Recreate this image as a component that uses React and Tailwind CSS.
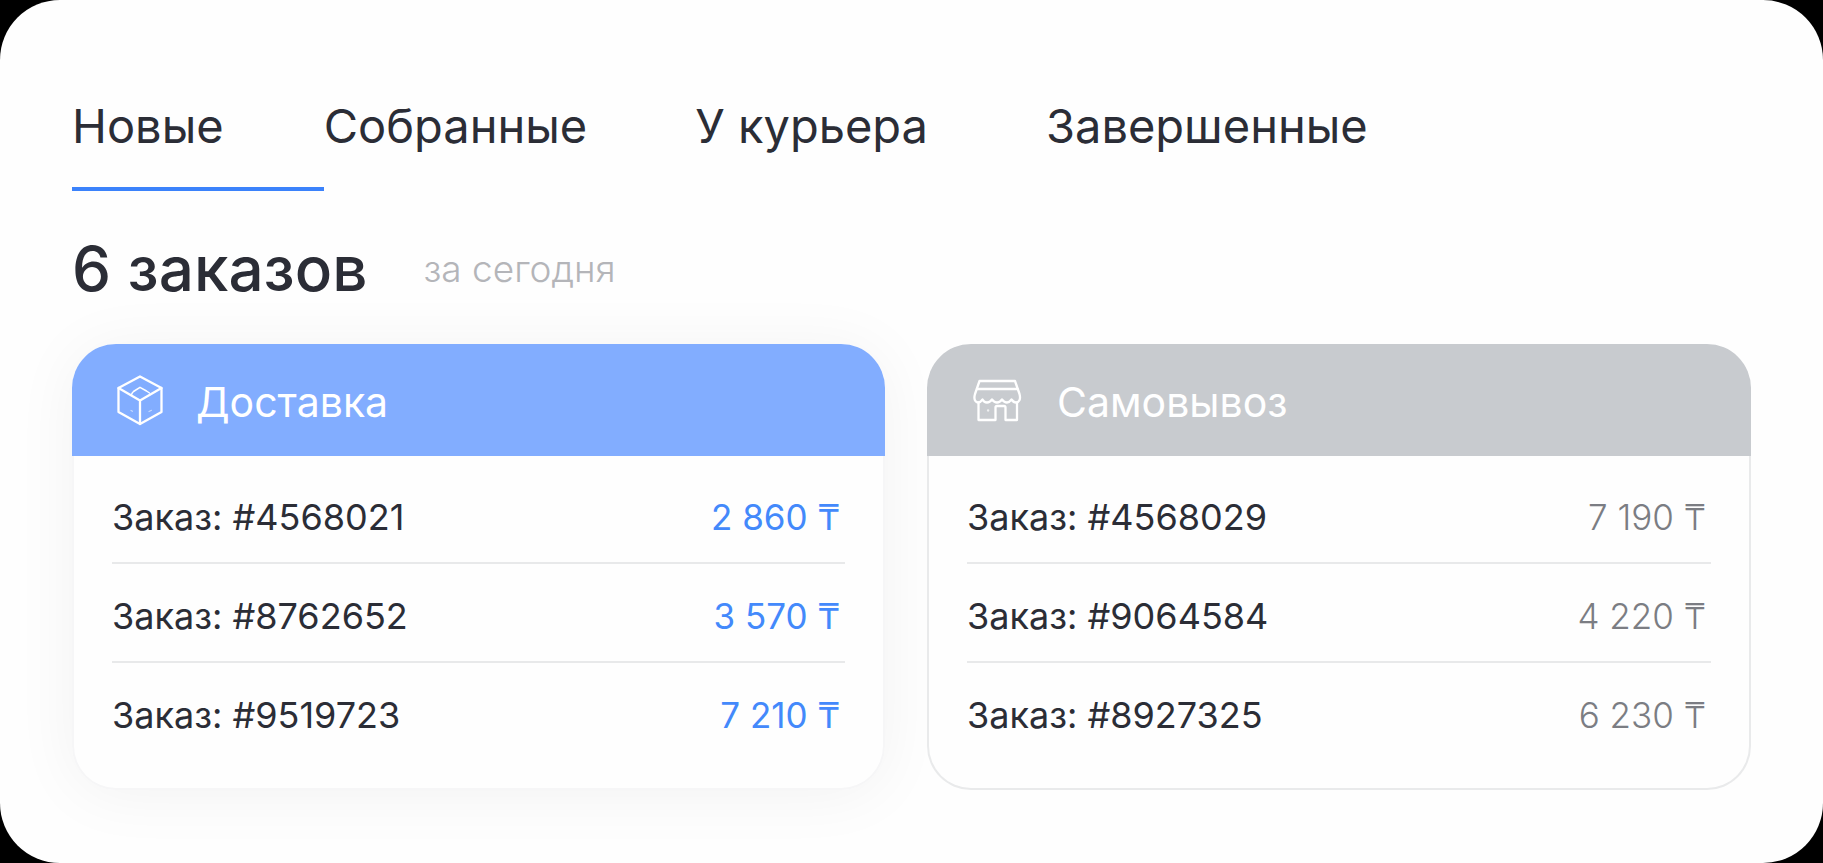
import { useState } from "react";

const TABS = [
  { id: "new", label: "Новые", space: "pr-[100px]" },
  { id: "packed", label: "Собранные", space: "pr-[108px]" },
  { id: "courier", label: "У курьера", space: "pr-[118px]" },
  { id: "done", label: "Завершенные", space: "" },
];

const DELIVERY = [
  { id: "4568021", price: "2 860 ₸" },
  { id: "8762652", price: "3 570 ₸" },
  { id: "9519723", price: "7 210 ₸" },
];

const PICKUP = [
  { id: "4568029", price: "7 190 ₸" },
  { id: "9064584", price: "4 220 ₸" },
  { id: "8927325", price: "6 230 ₸" },
];

function BoxIcon() {
  return (
    <svg
      aria-hidden="true"
      className="h-[52px] w-[52px] shrink-0"
      viewBox="0 0 52 52"
      fill="none"
      stroke="currentColor"
      strokeWidth="2.3"
      strokeLinejoin="round"
      strokeLinecap="round"
    >
      <path d="M26 2.500 47.500 14v24L26 50 4.500 38V14Z" />
      <path d="M4.500 14 26 26.500 47.500 14M26 26.500V50" />
      <path strokeWidth="1.500" d="M17.500 20.500c.5-1.500 1-2.200 2-3l6.500-4.200 6.500 3.700 3 2" />
      <path strokeWidth="1.200" opacity=".55" d="m17 36.500 1.500.8M35 37.500l2.500-1.200" />
    </svg>
  );
}

function StoreIcon() {
  return (
    <svg
      aria-hidden="true"
      className="h-[52px] w-[58px] shrink-0"
      viewBox="-2 0 58 52"
      fill="none"
      stroke="currentColor"
      strokeWidth="2.3"
      strokeLinejoin="round"
      strokeLinecap="round"
    >
      <path d="M8.500 7h35.500l4.500 13c1.500 5.500-.5 8.500-3.500 8.500-2.500 0-3.500-1.500-4.500-3-1.500 2-2.500 3-4.500 3s-3.500-1-5-3c-1.500 2-3 3-5 3s-3.500-1-5-3c-1.500 2-3 3-5 3s-3.500-1-4.500-3c-1.500 2-2.500 3-4 3-3.500 0-5-3.500-3.500-8.500Z" />
      <path d="M6 15h40.500" />
      <path d="M7.500 28.500V46h17V33.500q0-1.500 1.500-1.500h7q1.500 0 1.500 1.500V46h11.500V28.500" />
      <path d="M17 36.500h.2" opacity=".7" />
    </svg>
  );
}

function OrdersCard({ title, icon, orders, cardClass, headClass, bodyClass, priceClass }) {
  return (
    <section className={"rounded-[44px] bg-[#fefefe] " + cardClass}>
      <header
        className={"flex h-28 items-center gap-[30px] rounded-t-[44px] px-[42px] text-white " + headClass}
      >
        {icon}
        <h2 className="pt-1 text-[41px] leading-[52px]">{title}</h2>
      </header>
      <div className={"rounded-b-[44px] border-x-2 border-b-2 px-[38px] pt-[9px] pb-7 " + bodyClass}>
        <table className="w-full border-collapse">
          <tbody className="divide-y-2 divide-[#e8e9ea]">
            {orders.map((order) => (
              <tr key={order.id}>
                <th
                  scope="row"
                  className="pt-[30px] pb-[23px] text-left text-[36px] leading-[44px] font-normal text-[#2b2d36]"
                >
                  Заказ: #{order.id}
                </th>
                <td
                  className={"pt-[30px] pr-[5px] pb-[23px] text-right text-[35px] leading-[44px] " + priceClass}
                >
                  {order.price}
                </td>
              </tr>
            ))}
          </tbody>
        </table>
      </div>
    </section>
  );
}

export default function App() {
  const [active, setActive] = useState("new");
  return (
    <div className="min-h-screen bg-black font-['Inter',sans-serif]">
      <main className="min-h-screen rounded-[60px] bg-[#fefefe] px-[72px] pt-[97px] pb-[72px] text-[#2b2d36]">
        <div role="tablist" className="flex">
          {TABS.map((tab) => (
            <button
              key={tab.id}
              type="button"
              role="tab"
              aria-selected={active === tab.id}
              onClick={() => setActive(tab.id)}
              className={
                "border-b-4 pb-[33px] text-left text-[47px] leading-[57px] whitespace-nowrap " +
                tab.space +
                (active === tab.id ? " border-[#3b82fb]" : " border-transparent")
              }
            >
              {tab.label}
            </button>
          ))}
        </div>
        <div className="mt-10 flex items-center gap-14">
          <h1 className="text-[62px] leading-[76px] font-medium">6 заказов</h1>
          <p className="text-[37px] leading-[44px] font-light text-[#b4b5b9]">за сегодня</p>
        </div>
        <div className="mt-[37px] grid grid-cols-[813fr_824fr] gap-[42px]">
          <OrdersCard
            title="Доставка"
            icon={<BoxIcon />}
            orders={DELIVERY}
            cardClass="shadow-[0_4px_64px_rgba(0,0,0,0.05)]"
            headClass="bg-[#82adff]"
            bodyClass="border-[#f6f6f7]"
            priceClass="text-[#4389fb]"
          />
          <OrdersCard
            title="Самовывоз"
            icon={<StoreIcon />}
            orders={PICKUP}
            cardClass=""
            headClass="bg-[#c8cbcf]"
            bodyClass="border-[#e9eaeb]"
            priceClass="font-light text-[#7b7d83]"
          />
        </div>
      </main>
    </div>
  );
}
